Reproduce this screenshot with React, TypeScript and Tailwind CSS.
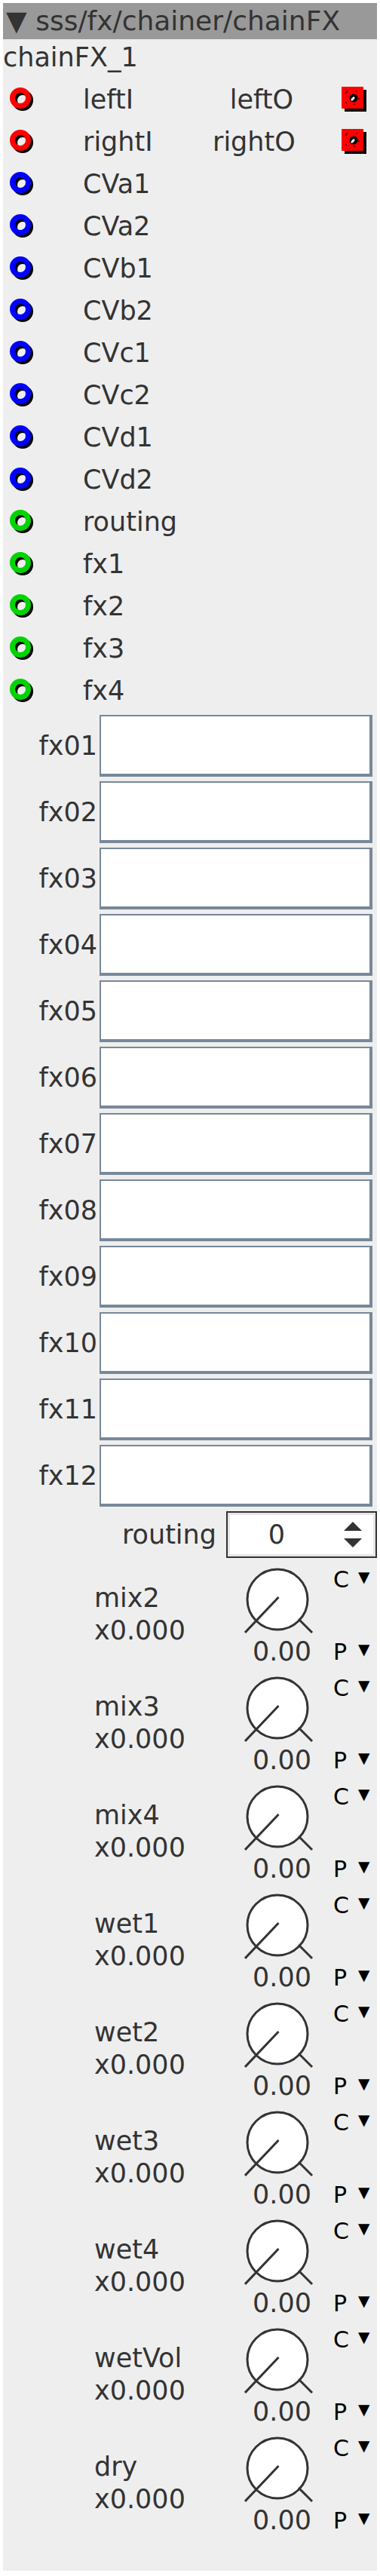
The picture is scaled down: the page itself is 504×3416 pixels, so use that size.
import React from 'react';

const font = { fontFamily: '"DejaVu Sans", Verdana, sans-serif' };

type PortKind = 'audio' | 'cv' | 'ctl';

const ringColor: Record<PortKind, string> = {
  audio: '#ff0000',
  cv: '#0000ff',
  ctl: '#00d400',
};

const PortRing = ({ kind }: { kind: PortKind }) => (
  <svg width="34" height="34" viewBox="0 0 34 34">
    <circle cx="18" cy="18" r="10.5" fill="none" stroke="#000" strokeWidth="7" />
    <circle cx="15" cy="15" r="10.5" fill="none" stroke={ringColor[kind]} strokeWidth="7" />
  </svg>
);

const OutPort = () => (
  <svg width="34" height="34" viewBox="0 0 34 34">
    <rect x="4" y="4" width="29" height="29" fill="#000" />
    <rect x="0" y="0" width="29" height="29" fill="#ff0000" />
    <rect x="6" y="6" width="17" height="17" fill="none" stroke="#000" strokeWidth="1.2" strokeDasharray="2 11" />
    <circle cx="16" cy="15" r="5.5" fill="#000" />
    <ellipse cx="15" cy="16" rx="1.6" ry="3.2" fill="#fff" transform="rotate(40 15 16)" />
  </svg>
);

const Knob = () => (
  <svg width="92" height="104" viewBox="0 0 92 104">
    <circle cx="44" cy="52" r="40" fill="#fff" stroke="#333" strokeWidth="3" />
    <line x1="45.5" y1="49" x2="1" y2="96" stroke="#333" strokeWidth="3" />
    <line x1="72" y1="78" x2="90" y2="96" stroke="#333" strokeWidth="3" />
  </svg>
);

const ports: { name: string; kind: PortKind; out?: string }[] = [
  { name: 'leftI', kind: 'audio', out: 'leftO' },
  { name: 'rightI', kind: 'audio', out: 'rightO' },
  { name: 'CVa1', kind: 'cv' },
  { name: 'CVa2', kind: 'cv' },
  { name: 'CVb1', kind: 'cv' },
  { name: 'CVb2', kind: 'cv' },
  { name: 'CVc1', kind: 'cv' },
  { name: 'CVc2', kind: 'cv' },
  { name: 'CVd1', kind: 'cv' },
  { name: 'CVd2', kind: 'cv' },
  { name: 'routing', kind: 'ctl' },
  { name: 'fx1', kind: 'ctl' },
  { name: 'fx2', kind: 'ctl' },
  { name: 'fx3', kind: 'ctl' },
  { name: 'fx4', kind: 'ctl' },
];

const fxSlots = ['fx01', 'fx02', 'fx03', 'fx04', 'fx05', 'fx06', 'fx07', 'fx08', 'fx09', 'fx10', 'fx11', 'fx12'];

const knobs = ['mix2', 'mix3', 'mix4', 'wet1', 'wet2', 'wet3', 'wet4', 'wetVol', 'dry'];

const App: React.FC = () => {
  return (
    <div className="min-h-screen bg-white pt-[4px] pl-[4px] pb-[6px]" style={font}>
      <div className="w-[496px] bg-[#eeeeee] pb-[44px] text-[35px] text-[#333333]">
        {/* Header */}
        <div className="flex h-[48px] items-center bg-[#999999] pl-[4px] text-[36px] leading-[40px]">
          ▼ sss/fx/chainer/chainFX
        </div>

        <div className="mt-[4px] h-[40px] leading-[40px]">chainFX_1</div>

        {/* Ports */}
        <div className="mt-[8px]">
          {ports.map(p => (
            <div key={p.name} className="flex h-[56px] items-center">
              <div className="w-[106px] pl-[8px]">
                <PortRing kind={p.kind} />
              </div>
              <div className="w-[172px] leading-[40px]">{p.name}</div>
              {p.out && (
                <>
                  <div className="w-[107px] text-right leading-[40px]">{p.out}</div>
                  <div className="ml-[64px]">
                    <OutPort />
                  </div>
                </>
              )}
            </div>
          ))}
        </div>

        {/* FX slots */}
        <div className="mt-[4px]">
          {fxSlots.map(slot => (
            <div key={slot} className="mb-[6px] flex h-[82px] items-center">
              <div className="w-[128px] pr-[3px] text-right leading-[40px]">{slot}</div>
              <div className="h-[82px] w-[362px] border-t-2 border-l-2 border-r-4 border-b-4 border-[#778899] bg-white" />
            </div>
          ))}
        </div>

        {/* Routing spinner */}
        <div className="mt-[1px] flex h-[62px] items-center">
          <div className="w-[283px] text-right leading-[40px]">routing</div>
          <div className="ml-[13px] flex h-[62px] w-[200px] border-2 border-[#333333] bg-white">
            <div className="flex flex-1 items-center border-[3px] border-[#e6e6e6]">
              <div className="w-[124px] text-center leading-[40px]">0</div>
              <div className="ml-[27px] flex w-[24px] flex-col items-center gap-[10px]">
                <svg width="24" height="12" viewBox="0 0 24 12">
                  <polygon points="12,0 24,12 0,12" fill="#333" />
                </svg>
                <svg width="24" height="12" viewBox="0 0 24 12">
                  <polygon points="0,0 24,0 12,12" fill="#333" />
                </svg>
              </div>
            </div>
          </div>
        </div>

        {/* Knobs */}
        <div className="mt-[3px]">
          {knobs.map(k => (
            <div key={k} className="flex h-[144px]">
              <div className="flex w-[320px] flex-col justify-center pl-[121px] leading-[43px]">
                <div>{k}</div>
                <div>x0.000</div>
              </div>
              <div className="flex w-[92px] flex-col">
                <Knob />
                <div className="pl-[8px] text-center leading-[34px]">0.00</div>
              </div>
              <div className="ml-[26px] flex flex-col text-[30px] leading-[30px] text-black">
                <div className="mt-[11px] flex items-start">
                  <span>C</span>
                  <span className="ml-[12px] text-[20px] leading-[22px]">▼</span>
                </div>
                <div className="mt-[66px] flex items-start">
                  <span>P</span>
                  <span className="ml-[15px] text-[20px] leading-[22px]">▼</span>
                </div>
              </div>
            </div>
          ))}
        </div>
      </div>
    </div>
  );
};

export default App;
